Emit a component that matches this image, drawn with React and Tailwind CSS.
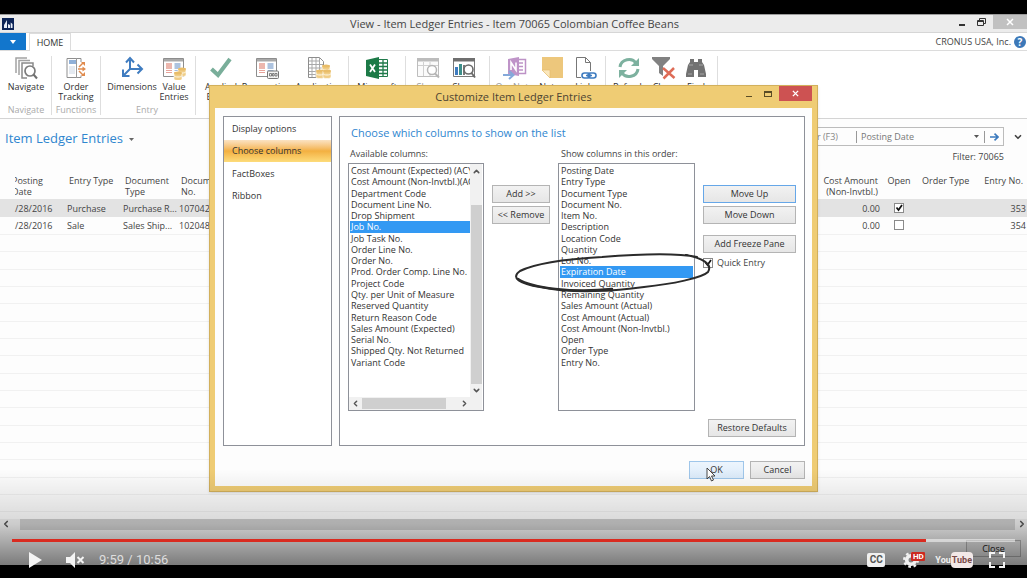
import React from 'react';
import { ChevronDown, ChevronLeft, ChevronRight, ChevronUp } from 'lucide-react';

/* ---------- Ribbon icons ---------- */

const Icon = ({ children }) => (
    <svg viewBox="0 0 24 24" className="w-6 h-6 shrink-0" fill="none">{children}</svg>
);

const NavigateIcon = () => (
    <Icon>
        <path d="M2 17V2h11M5 19V4.500h11" stroke="#a3a3a3" strokeWidth="1.500" />
        <path d="M19 10V7H8v15h5" stroke="#8b8b8b" strokeWidth="1.500" />
        <circle cx="16" cy="15" r="5" fill="#fff" stroke="#7c7c7c" strokeWidth="1.700" />
        <path d="M19.500 18.500L23 22.500" stroke="#6f6f6f" strokeWidth="2" />
    </Icon>
);

const TrackingIcon = () => (
    <Icon>
        <path d="M13 2.500H3v19h14v-2M13 2.500h4V6" stroke="#8f8f8f" />
        <path d="M5 4h7v4H5z" fill="#8fb0d8" />
        <path d="M5 11h6M5 13h6M5 15h6M5 17h6" stroke="#c9d4e2" />
        <path d="M12.500 2v20" stroke="#9a9a9a" />
        <path d="M14 13h5M15 11l4-4M15 15l4 4" stroke="#e08a4c" strokeWidth="1.500" />
        <path d="M18.500 10.500L22 13l-3.500 2.500zM17 6h4v4zM17 20h4v-4z" fill="#e08a4c" />
    </Icon>
);

const DimensionsIcon = () => (
    <Icon>
        <path d="M10 4v9M10 13h11M10 13l-6 6" stroke="#3f7cc0" strokeWidth="2" />
        <path d="M6 6.500l4-4.500 4 4.500M17.500 8.500l4.500 4.500-4.500 4.500M3 13.500V20h6.500" stroke="#3f7cc0" strokeWidth="2" />
    </Icon>
);

const LedgerSheet = () => (
    <>
        <path d="M1.500 2.500h20v18h-20z" fill="#fff" stroke="#8d8d8d" />
        <path d="M2 3h19v2.500H2z" fill="#a9a9a9" />
        <path d="M4 8h6M4 10h6M4 12h6" stroke="#d9705f" strokeWidth="1.200" />
        <path d="M4 14.500h6M4 16.500h6" stroke="#e7a39a" strokeWidth="1.200" />
        <path d="M12.500 8h6M12.500 10h6M12.500 12h6" stroke="#5d87bf" strokeWidth="1.200" />
        <path d="M12.500 14.500h6M12.500 16.500h6" stroke="#a3bbdc" strokeWidth="1.200" />
    </>
);

const Coins = ({ x, y }) => (
    <g transform={`translate(${x} ${y})`}>
        <path d="M0 2v6c0 2 8 2 8 0V2z" fill="#f0cd87" stroke="#fff" strokeWidth=".6" />
        <path d="M0 4.500c0 2 8 2 8 0" stroke="#fff8e6" />
        <ellipse cx="4" cy="2" rx="4" ry="1.500" fill="#e9bd69" />
    </g>
);

const ValueIcon = () => (
    <Icon>
        <LedgerSheet />
        <Coins x={16} y={11} />
        <Coins x={12} y={15} />
    </Icon>
);

const AppliedIcon = () => (
    <Icon>
        <path d="M2.500 13l6.500 6L21 3" stroke="#79ae9a" strokeWidth="4" />
    </Icon>
);

const ReservationIcon = () => (
    <Icon>
        <LedgerSheet />
        <rect x="12.500" y="15" width="11" height="7.500" rx="1" fill="#f2f2f2" stroke="#777" />
        <path d="M14.500 17.500h2v2.500h-2zM17.500 17.500h1.500v2.500h-1.500zM20 17.500h2v2.500h-2z" stroke="#666" strokeWidth=".8" />
    </Icon>
);

const WorksheetIcon = () => (
    <Icon>
        <path d="M1.500 1.500h11l4 4v16h-15z" fill="#fff" stroke="#8d8d8d" />
        <path d="M2 5h11M2 8.500h14M2 12h14M2 15.500h14M2 18.500h14M5 2v19M9 2v19M12.500 2v19" stroke="#a9a9a9" />
        <Coins x={15} y={8} />
        <Coins x={9} y={13} />
        <Coins x={16} y={13} />
    </Icon>
);

const ExcelIcon = () => (
    <Icon>
        <path d="M13 3.500h9.500v17H13" fill="#fff" stroke="#207a4b" />
        <path d="M14 7h8M14 10.500h8M14 14h8M14 17.500h8M18 4v16" stroke="#207a4b" strokeWidth="1.300" />
        <path d="M1 4l13-3v22L1 20z" fill="#1c7a47" />
        <path d="M5 8.500l5 7.500M10 8.500L5 16" stroke="#fff" strokeWidth="1.800" />
    </Icon>
);

const ShowListIcon = () => (
    <Icon>
        <path d="M1.500 3.500h21v17h-21z" fill="#fbfbfb" stroke="#bdbdbd" />
        <path d="M1 2h22v3.500H1z" fill="#bcbcbc" />
        <path d="M7.500 6v14M14 6v14M2 9.500h20" stroke="#d0d0d0" />
        <circle cx="16" cy="14" r="4.500" fill="#fff" stroke="#b5b5b5" strokeWidth="1.500" />
        <path d="M19 17.500l4 4" stroke="#b5b5b5" strokeWidth="2" />
    </Icon>
);

const ShowChartIcon = () => (
    <Icon>
        <path d="M1.500 3.500h21v17h-21z" fill="#fff" stroke="#7a7a7a" />
        <path d="M1 2h22v3.500H1z" fill="#6f6f6f" />
        <path d="M3 11h3v8H3z" fill="#3f7cc0" />
        <path d="M7 8h3v11H7z" fill="#3d8f8a" />
        <path d="M11 9h2v10h-2z" fill="#7a7a7a" />
        <circle cx="16.500" cy="13.500" r="4.500" fill="#fff" stroke="#6a6a6a" strokeWidth="1.600" />
        <path d="M19.500 17l3.500 4.500" stroke="#6a6a6a" strokeWidth="2" />
    </Icon>
);

const OneNoteIcon = () => (
    <Icon>
        <path d="M14 3.500h8.500v14H14M16 7h4M16 10.500h4M16 14h4" stroke="#bd92c6" strokeWidth="1.500" />
        <path d="M5 3l11-2v19L5 18z" fill="#bf94c8" />
        <path d="M8 14V6.500l5 7.500V6.500" stroke="#fff" strokeWidth="1.600" />
        <path d="M0 19h9M6 15l4.500 4L6 23" stroke="#84a9da" strokeWidth="2" />
    </Icon>
);

const NotesIcon = () => (
    <Icon>
        <path d="M2 1h21v21H10l-8-8z" fill="#edc77c" />
        <path d="M2 14h8v8z" fill="#fae7bd" stroke="#e5bd70" strokeWidth=".7" />
    </Icon>
);

const LinksIcon = () => (
    <Icon>
        <path d="M7 21.500H2.500v-20h9l5 5V15M11.500 1.500v5h5" stroke="#777" />
        <rect x="8" y="17" width="8" height="5" rx="2.500" stroke="#3f7cc0" strokeWidth="1.600" />
        <rect x="14" y="17" width="8" height="5" rx="2.500" stroke="#3f7cc0" strokeWidth="1.600" />
        <path d="M12 19.500h6" stroke="#3f7cc0" strokeWidth="1.500" />
    </Icon>
);

const RefreshIcon = () => (
    <Icon>
        <path d="M3 11c1-8 12-10 16-4M21 13c-1 8-12 10-16 4" stroke="#7db19f" strokeWidth="3" />
        <path d="M22 2v8h-8zM2 22v-8h8z" fill="#7db19f" />
    </Icon>
);

const ClearIcon = () => (
    <Icon>
        <path d="M0 1h18v2l-7 7v10l-4-3v-7L0 3z" fill="#818181" />
        <path d="M11 12l11.500 10M22 12L11.500 22.500" stroke="#de6c57" strokeWidth="2.500" />
    </Icon>
);

const FindIcon = () => (
    <Icon>
        <path d="M6 3h4v3h4V3h4v3l2 3 2 9v3h-8v-7h-4v7H2v-3l2-9 2-3z" fill="#727272" />
        <path d="M5 9h4M15 9h4M4 18h4M16 18h4" stroke="#a5a5a5" />
    </Icon>
);

/* ---------- Data ---------- */

const ribbonGroups = [
    { caption: 'Navigate', className: 'pl-px', items: [{ label: 'Navigate', icon: NavigateIcon, className: 'w-[50px]' }] },
    { caption: 'Functions', className: '', items: [{ label: 'Order\nTracking', icon: TrackingIcon, className: 'w-[48px]' }] },
    {
        caption: 'Entry',
        className: 'pl-1 pr-[6px]',
        items: [
            { label: 'Dimensions', icon: DimensionsIcon, className: 'w-[54px]' },
            { label: 'Value\nEntries', icon: ValueIcon, className: 'w-[30px]' },
        ],
    },
    {
        caption: '',
        className: 'pl-[3px]',
        items: [
            { label: 'Applied\nEntries', icon: AppliedIcon, className: 'w-[44px]' },
            { label: 'Reservation\nEntries', icon: ReservationIcon, className: 'w-[47px]' },
            { label: 'Application\nWorksheet', icon: WorksheetIcon, className: 'w-[58px]' },
        ],
    },
    { caption: '', className: '', items: [{ label: 'Microsoft\nExcel', icon: ExcelIcon, className: 'w-[56px]' }] },
    {
        caption: '',
        className: 'pl-[3px] pr-2',
        items: [
            { label: 'Show\nas List', icon: ShowListIcon, className: 'w-[38px] text-[#999]' },
            { label: 'Show\nas Chart', icon: ShowChartIcon, className: 'w-[34px]' },
        ],
    },
    {
        caption: '',
        className: 'pl-[3px]',
        items: [
            { label: 'OneNote', icon: OneNoteIcon, className: 'w-[43px] text-[#999]' },
            { label: 'Notes', icon: NotesIcon, className: 'w-[31px]' },
            { label: 'Links', icon: LinksIcon, className: 'w-[38px]' },
        ],
    },
    {
        caption: '',
        className: 'pl-[3px] pr-[3px]',
        items: [
            { label: 'Refresh', icon: RefreshIcon, className: 'w-[40px]' },
            { label: 'Clear\nFilter', icon: ClearIcon, className: 'w-[29px]' },
            { label: 'Find', icon: FindIcon, className: 'w-[36px]' },
        ],
    },
];

const entries = [
    { date: '/28/2016', type: 'Purchase', docType: 'Purchase R...', docNo: '107042', cost: '0.00', open: true, entryNo: '353' },
    { date: '/28/2016', type: 'Sale', docType: 'Sales Ship...', docNo: '102048', cost: '0.00', open: false, entryNo: '354' },
];

const emptyRows = Array.from({ length: 16 }, (_, i) => i);

const availableColumns = [
    'Cost Amount (Expected) (ACY)',
    'Cost Amount (Non-Invtbl.)(ACY)',
    'Department Code',
    'Document Line No.',
    'Drop Shipment',
    'Job No.',
    'Job Task No.',
    'Order Line No.',
    'Order No.',
    'Prod. Order Comp. Line No.',
    'Project Code',
    'Qty. per Unit of Measure',
    'Reserved Quantity',
    'Return Reason Code',
    'Sales Amount (Expected)',
    'Serial No.',
    'Shipped Qty. Not Returned',
    'Variant Code',
];

const shownColumns = [
    'Posting Date',
    'Entry Type',
    'Document Type',
    'Document No.',
    'Item No.',
    'Description',
    'Location Code',
    'Quantity',
    'Lot No.',
    'Expiration Date',
    'Invoiced Quantity',
    'Remaining Quantity',
    'Sales Amount (Actual)',
    'Cost Amount (Actual)',
    'Cost Amount (Non-Invtbl.)',
    'Open',
    'Order Type',
    'Entry No.',
];

/* ---------- Main window ---------- */

const TitleBar = () => (
    <header className="h-[19px] bg-[#ececec] border-t border-b border-t-[#9b9b9b] border-b-[#d6d6d6] flex items-center">
        <div className="flex-1 pl-[2px]">
            <svg viewBox="0 0 12 12" className="w-3 h-3">
                <path d="M0 0h12v12H0z" fill="#0c2457" />
                <path d="M2 10V7l3-5v8zM6 10V6l2 1v3zM8.700 10V4.500L10.500 6v4z" fill="#e8eef8" />
            </svg>
        </div>
        <h1 className="text-[11px] leading-4 text-[#444]">View - Item Ledger Entries - Item 70065 Colombian Coffee Beans</h1>
        <div className="flex-1 self-stretch flex justify-end items-start">
            <button aria-label="Minimize" className="w-[14px] h-[15px] flex items-center justify-center">
                <span className="w-[6px] h-[2px] bg-[#333] mt-[5px]"></span>
            </button>
            <button aria-label="Restore" className="w-6 h-[15px] flex items-center justify-center">
                <svg viewBox="0 0 9 9" className="w-[9px] h-[9px]" fill="none" stroke="#333">
                    <path d="M.5 2.500h6v5h-6zM.5 3.500h6M2.500 2.500v-2h6v5h-2" />
                </svg>
            </button>
            <button aria-label="Close window" className="w-[34px] h-[14px] bg-[#c1c1c1] flex items-center justify-center">
                <svg viewBox="0 0 8 8" className="w-2 h-2" stroke="#fff" strokeWidth="1.500"><path d="M1 1l6 6M7 1L1 7" /></svg>
            </button>
        </div>
    </header>
);

const Tabs = () => (
    <nav className="h-[18px] flex items-stretch border-b border-[#dcdcdc] bg-white">
        <button aria-label="Application menu" className="w-[26px] bg-[#1276cc] flex items-center justify-center">
            <svg viewBox="0 0 6 4" className="w-[6px] h-1"><path d="M0 0h6L3 4z" fill="#fff" /></svg>
        </button>
        <button className="w-[42px] ml-[3px] -mb-px bg-white border border-b-0 border-[#dcdcdc] text-[9px] text-[#333]">HOME</button>
        <div className="ml-auto pr-px flex items-center gap-[3px] text-[9px] text-[#444]">
            <span>CRONUS USA, Inc.</span>
            <button aria-label="Help" className="w-3 h-3 rounded-full bg-[#3c78b8] text-white text-[10px] leading-3 font-bold">?</button>
        </div>
    </nav>
);

const Ribbon = () => (
    <div className="h-[68px] pt-[5px] pb-[3px] flex border-b border-[#d4d4d4] bg-white">
        {ribbonGroups.map((group, i) => (
            <div key={i} className={`flex flex-col justify-between border-r border-[#dedede] text-[#333] ${group.className}`}>
                <div className="flex">
                    {group.items.map(({ label, icon: Glyph, className }) => (
                        <button key={label} className={`flex flex-col items-center gap-[2px] text-[9px] leading-[10px] whitespace-pre-line ${className}`}>
                            <Glyph />
                            <span>{label}</span>
                        </button>
                    ))}
                </div>
                <div className="h-[10px] text-center text-[9px] leading-[10px] text-[#aaa]">{group.caption}</div>
            </div>
        ))}
    </div>
);

const FilterBar = () => (
    <div className="h-[54px] pt-2 pl-[5px] pr-1 flex items-start justify-between">
        <button className="h-6 flex items-center gap-[6px] text-[13px] text-[#2f86cf]">
            Item Ledger Entries
            <svg viewBox="0 0 5 3" className="w-[5px] h-[3px]"><path d="M0 0h5L2.500 3z" fill="#666" /></svg>
        </button>
        <div className="flex items-start">
            <div>
                <div className="h-[19px] flex items-center border border-[#bcbcbc] text-[9px] text-[#777]">
                    <input aria-label="Type to filter" placeholder="Type to filter (F3)" className="w-[98px] pr-[18px] text-right outline-none placeholder:text-[#888]" />
                    <div className="w-[129px] h-3 border-l border-r border-[#999] flex items-center">
                        <select aria-label="Filter field" className="appearance-none flex-1 pl-1 outline-none">
                            <option>Posting Date</option>
                        </select>
                        <svg viewBox="0 0 5 3" className="w-[5px] h-[3px] mr-[5px]"><path d="M0 0h5L2.500 3z" fill="#555" /></svg>
                    </div>
                    <button aria-label="Apply filter" className="w-[18px] flex justify-center">
                        <svg viewBox="0 0 9 8" className="w-[9px] h-2" fill="none" stroke="#3a79bd" strokeWidth="1.600">
                            <path d="M0 4h8M4.500 .7L8 4 4.500 7.300" />
                        </svg>
                    </button>
                </div>
                <p className="mt-[5px] text-right text-[9px] leading-3 text-[#444]">Filter: 70065</p>
            </div>
            <button aria-label="Expand filters" className="h-[19px] ml-[9px] flex items-center">
                <ChevronDown size={10} strokeWidth={4} color="#444" />
            </button>
        </div>
    </div>
);

const EntriesTable = () => (
    <table className="w-full table-fixed border-collapse text-[9px] leading-[11px] text-[#444]">
        <colgroup>
            <col className="w-[66px]" />
            <col className="w-[56px]" />
            <col className="w-[56px]" />
            <col />
            <col className="w-[80px]" />
            <col className="w-[34px]" />
            <col className="w-[60px]" />
            <col className="w-[51px]" />
        </colgroup>
        <thead>
            <tr className="h-[26px] align-top text-left">
                <th className="pt-[2px] pl-[15px] font-normal">
                    <span className="block overflow-hidden"><span className="block -ml-[3px]">Posting<br />Date</span></span>
                </th>
                <th className="pt-[2px] pl-[3px] font-normal">Entry Type</th>
                <th className="pt-[2px] pl-[3px] font-normal">Document Type</th>
                <th className="pt-[2px] pl-[3px] font-normal">Document<br />No.</th>
                <th className="pt-[2px] pr-1 font-normal text-right">Cost Amount (Non-Invtbl.)</th>
                <th className="pt-[2px] font-normal text-center">Open</th>
                <th className="pt-[2px] pl-[6px] font-normal">Order Type</th>
                <th className="pt-[2px] pr-1 font-normal text-right">Entry No.</th>
            </tr>
        </thead>
        <tbody>
            {entries.map((row) => (
                <tr key={row.entryNo} className={row.open ? 'h-[18px] bg-[#e3e3e3]' : 'h-[17px] border-b border-[#f1f1f1]'}>
                    <td className="pl-[15px]">{row.date}</td>
                    <td className="pl-px">{row.type}</td>
                    <td className="pl-px whitespace-nowrap">{row.docType}</td>
                    <td className="pl-px">{row.docNo}</td>
                    <td className="pr-[2px] text-right">{row.cost}</td>
                    <td>
                        <CheckBox label={`Entry ${row.entryNo} open`} checked={row.open} className="mx-auto" />
                    </td>
                    <td></td>
                    <td className="pr-px text-right">{row.entryNo}</td>
                </tr>
            ))}
            {emptyRows.map((i) => (
                <tr key={i} className={`border-b border-[#f1f1f1] ${i % 3 === 1 ? 'h-[18px]' : 'h-[17px]'}`}>
                    <td colSpan={8}></td>
                </tr>
            ))}
        </tbody>
    </table>
);

const CheckBox = ({ label, id, checked, className = '' }) => (
    <span className={`relative block w-[10px] h-[10px] ${className}`}>
        <input
            id={id}
            type="checkbox"
            aria-label={label}
            defaultChecked={checked}
            className="peer block appearance-none w-[10px] h-[10px] bg-white border border-[#8a8a8a]"
        />
        <svg viewBox="0 0 10 10" className="absolute inset-0 w-[10px] h-[10px] hidden peer-checked:block pointer-events-none" fill="none">
            <path d="M2.500 4.500l2 2.500 3.500-5" stroke="#111" strokeWidth="1.700" />
        </svg>
    </span>
);

const WindowFooter = () => (
    <>
        <div className="h-[11px] mt-[7px] flex items-center justify-between bg-[#f0f0f0]">
            <button aria-label="Scroll left" className="w-5 flex pl-px"><ChevronLeft size={10} strokeWidth={4} color="#555" /></button>
            <div className="flex-1 h-full bg-[#cdcdcd]"></div>
            <button aria-label="Scroll right" className="w-3 flex justify-end"><ChevronRight size={10} strokeWidth={4} color="#555" /></button>
        </div>
        <div className="h-[35px] pt-[10px] pr-[6px] flex justify-end items-start bg-[#f0f0f0]">
            <button className="w-[55px] h-[17px] bg-[#e8e8e8] border border-[#b5b5b5] text-[9px] leading-[15px] text-[#222]">Close</button>
        </div>
    </>
);

/* ---------- Customize dialog ---------- */

const DialogButton = ({ className = '', children }) => (
    <button className={`h-[18px] border text-[9px] leading-4 text-[#333] ${className}`}>{children}</button>
);

const plain = 'border-[#b4b4b4] bg-linear-to-b from-[#f2f2f2] to-[#e6e6e6]';

const OptionList = ({ label, options, selected }) => (
    <ul role="listbox" aria-label={label} className="flex-1 h-[203px] grid auto-rows-fr overflow-hidden text-[9px] leading-[11px] text-[#333]">
        {options.map((option) => (
            <li
                key={option}
                role="option"
                aria-selected={option === selected}
                className="pl-px whitespace-nowrap overflow-hidden aria-selected:bg-[#3399f3] aria-selected:text-white"
            >
                {option}
            </li>
        ))}
    </ul>
);

const AvailableList = () => (
    <div className="h-[248px] border border-[#8e9199] bg-white flex flex-col">
        <div className="flex-1 flex pr-px">
            <div className="flex-1 min-w-0 flex pt-px pl-px">
                <OptionList label="Available columns" options={availableColumns} selected="Job No." />
            </div>
            <div className="w-3 flex flex-col items-center bg-[#f1f1f1]">
                <button aria-label="Scroll up" className="h-[41px] pt-[3px] flex items-start"><ChevronUp size={9} strokeWidth={4} color="#555" /></button>
                <div className="w-[11px] flex-1 bg-[#cfcfcf]"></div>
                <button aria-label="Scroll down" className="h-[13px]"><ChevronDown size={9} strokeWidth={4} color="#555" /></button>
            </div>
        </div>
        <div className="h-[13px] mr-px flex items-center bg-[#f1f1f1]">
            <button aria-label="Scroll left" className="w-[13px] flex justify-center"><ChevronLeft size={9} strokeWidth={4} color="#555" /></button>
            <div className="w-[84px] h-[11px] bg-[#cfcfcf]"></div>
            <button aria-label="Scroll right" className="w-[36px] flex justify-center"><ChevronRight size={9} strokeWidth={4} color="#555" /></button>
        </div>
    </div>
);

const ColumnsPanel = () => (
    <section className="flex-1 h-[330px] px-2 pt-[6px] border border-[#8e9199] bg-white">
        <h3 className="pl-[3px] text-[11px] leading-5 text-[#2f86cf]">Choose which columns to show on the list</h3>
        <div className="mt-1 flex gap-2">
            <div className="w-[136px]">
                <p className="h-4 pl-[2px] text-[9px] leading-[14px] text-[#444]">Available columns:</p>
                <AvailableList />
            </div>
            <div className="w-[58px] pt-[38px] flex flex-col gap-[3px]">
                <DialogButton className={plain}>Add &gt;&gt;</DialogButton>
                <DialogButton className={plain}>&lt;&lt; Remove</DialogButton>
            </div>
            <div className="w-[137px]">
                <p className="h-4 pl-[3px] text-[9px] leading-[14px] text-[#444]">Show columns in this order:</p>
                <div className="h-[248px] pt-px px-px border border-[#8e9199] flex items-start">
                    <OptionList label="Show columns in this order" options={shownColumns} selected="Expiration Date" />
                </div>
            </div>
            <div className="flex-1 pt-[38px] flex flex-col">
                <DialogButton className="border-[#66a7e8] bg-linear-to-b from-[#f2f2f2] to-[#e6e6e6]">Move Up</DialogButton>
                <DialogButton className={`mt-[3px] ${plain}`}>Move Down</DialogButton>
                <DialogButton className={`mt-[11px] ${plain}`}>Add Freeze Pane</DialogButton>
                <div className="mt-1 flex items-center gap-1 text-[9px] leading-3 text-[#444]">
                    <CheckBox id="quick-entry" checked />
                    <label htmlFor="quick-entry">Quick Entry</label>
                </div>
            </div>
        </div>
        <div className="mt-2 flex justify-end">
            <DialogButton className={`w-[88px] ${plain}`}>Restore Defaults</DialogButton>
        </div>
    </section>
);

const CustomizeDialog = () => (
    <div role="dialog" aria-label="Customize Item Ledger Entries" className="absolute inset-x-0 top-[85px] mx-auto w-[609px] px-[5px] pb-[5px] bg-[#efcc74] border border-[#d2b05c] shadow-sm">
        <div className="h-[22px] flex items-start">
            <div className="flex-1"></div>
            <h2 className="text-[11px] leading-[22px] text-[#4d4433]">Customize Item Ledger Entries</h2>
            <div className="flex-1 flex justify-end">
                <button aria-label="Minimize dialog" className="w-4 h-[15px] flex justify-center items-center">
                    <span className="w-[6px] h-px mt-[5px] bg-[#5a4c25]"></span>
                </button>
                <button aria-label="Maximize dialog" className="w-[22px] h-[15px] flex justify-center items-center">
                    <span className="w-2 h-[6px] border border-t-2 border-[#5a4c25]"></span>
                </button>
                <button aria-label="Close dialog" className="w-[33px] h-[15px] bg-[#cd5252] flex justify-center items-center">
                    <svg viewBox="0 0 8 8" className="w-[7px] h-[7px]" stroke="#fff" strokeWidth="1.600"><path d="M1 1l6 6M7 1L1 7" /></svg>
                </button>
            </div>
        </div>
        <div className="h-[378px] pl-2 pr-[7px] pt-2 bg-[#fdfdfd]">
            <div className="flex gap-[7px]">
                <nav className="w-[109px] h-[330px] border border-[#8e9199] bg-white">
                    <div className="h-[90px] grid auto-rows-fr text-[9px] text-[#333]">
                        <button className="pl-2 text-left">Display options</button>
                        <button className="pl-2 text-left bg-linear-to-b from-[#fbe3c2] via-[#f3b040] to-[#fddc7a]">Choose columns</button>
                        <button className="pl-2 text-left">FactBoxes</button>
                        <button className="pl-2 text-left">Ribbon</button>
                    </div>
                </nav>
                <ColumnsPanel />
            </div>
            <div className="mt-[15px] flex justify-end gap-[6px]">
                <DialogButton className="w-[55px] border-[#9fc6ea] bg-linear-to-b from-[#edf5fd] to-[#dcebfa]">OK</DialogButton>
                <DialogButton className={`w-[55px] ${plain}`}>Cancel</DialogButton>
            </div>
        </div>

        {/* Hand-drawn circle around the new column */}
        <svg viewBox="0 0 200 44" className="absolute left-[302px] top-[165px] w-[200px] h-[44px] pointer-events-none" fill="none" stroke="#2b2b2b" strokeLinecap="round">
            <path d="M185 6C160 1 115 4 90 6 55 8 22 13 8 20-2 27 8 33 28 36 60 43 105 40 132 36 160 33 190 27 196 21 201 13 190 7 174 4" strokeWidth="2" />
            <path d="M6 28C20 37 60 42 100 38" strokeWidth="2.500" />
        </svg>

        {/* Mouse pointer */}
        <svg viewBox="0 0 10 15" className="absolute left-[496px] top-[381px] w-[10px] h-[15px] pointer-events-none">
            <path d="M1 1v11l2.500-2.500L5.500 14l2-1-2-4H9z" fill="#fff" stroke="#333" strokeWidth=".9" />
        </svg>
    </div>
);

/* ---------- Video player ---------- */

const PlayerControls = () => (
    <div className="absolute inset-x-0 bottom-0 px-3">
        <div className="h-[3px] bg-white/50">
            <div className="h-full bg-[#d92b20]" style={{ width: `${(914 / 1003) * 100}%` }}></div>
        </div>
        <div className="h-[37px] flex items-center pl-4 pr-[10px]">
            <button aria-label="Play" className="w-[15px]">
                <svg viewBox="0 0 15 16" className="w-[15px] h-4"><path d="M1 0l13 8-13 8z" fill="#f4f4f4" /></svg>
            </button>
            <button aria-label="Unmute" className="ml-[22px]">
                <svg viewBox="0 0 20 16" className="w-5 h-4">
                    <path d="M1 5h4l5-5v16l-5-5H1z" fill="#f4f4f4" />
                    <path d="M12.500 5l6 6M18.500 5l-6 6" stroke="#f4f4f4" strokeWidth="2" />
                </svg>
            </button>
            <span className="ml-[14px] font-['Roboto',sans-serif] text-[13px] leading-4 text-[#dedede]">9:59 / 10:56</span>
            <div className="ml-auto flex items-center">
                <button aria-label="Subtitles" className="w-[18px] h-[14px] rounded-[2px] bg-[#f0f0f0] font-['Roboto',sans-serif] text-[10px] leading-[14px] font-bold text-[#555]">CC</button>
                <button aria-label="Settings" className="relative ml-[18px] w-[22px] h-4">
                    <svg viewBox="0 0 16 16" className="w-4 h-4" fill="none" stroke="#f0f0f0">
                        <circle cx="8" cy="8" r="6.800" strokeWidth="2.400" strokeDasharray="2.670 2.670" />
                        <circle cx="8" cy="8" r="4.300" strokeWidth="3.600" />
                    </svg>
                    <span className="absolute right-0 top-0 w-[14px] h-[9px] rounded-[1px] bg-[#cc2a20] font-['Roboto',sans-serif] text-[8px] leading-[9px] font-bold text-white">HD</span>
                </button>
                <a href="#youtube" className="ml-[10px] flex items-center font-['Roboto',sans-serif] text-[9px] leading-4 font-bold text-[#f0f0f0]">
                    You
                    <span className="h-4 px-px rounded-[4px] bg-[#f3e9e8] text-[#7a4a47]">Tube</span>
                </a>
                <button aria-label="Full screen" className="ml-4">
                    <svg viewBox="0 0 16 16" className="w-4 h-4" fill="none" stroke="#f4f4f4" strokeWidth="2">
                        <path d="M1 6V1h5M10 1h5v5M15 10v5h-5M6 15H1v-5" />
                    </svg>
                </button>
            </div>
        </div>
    </div>
);

const App = () => {
    return (
        <div className="relative bg-black pt-[14px] pb-[14px] overflow-hidden font-['Open_Sans','Noto_Sans',sans-serif]">
            <main className="bg-[#fdfdfd]">
                <TitleBar />
                <Tabs />
                <Ribbon />
                <FilterBar />
                <EntriesTable />
                <WindowFooter />
            </main>
            <CustomizeDialog />
            <div className="absolute inset-x-0 bottom-0 h-[110px] bg-linear-to-b from-black/0 via-black/15 to-black/60 pointer-events-none"></div>
            <PlayerControls />
        </div>
    );
};

export default App;
